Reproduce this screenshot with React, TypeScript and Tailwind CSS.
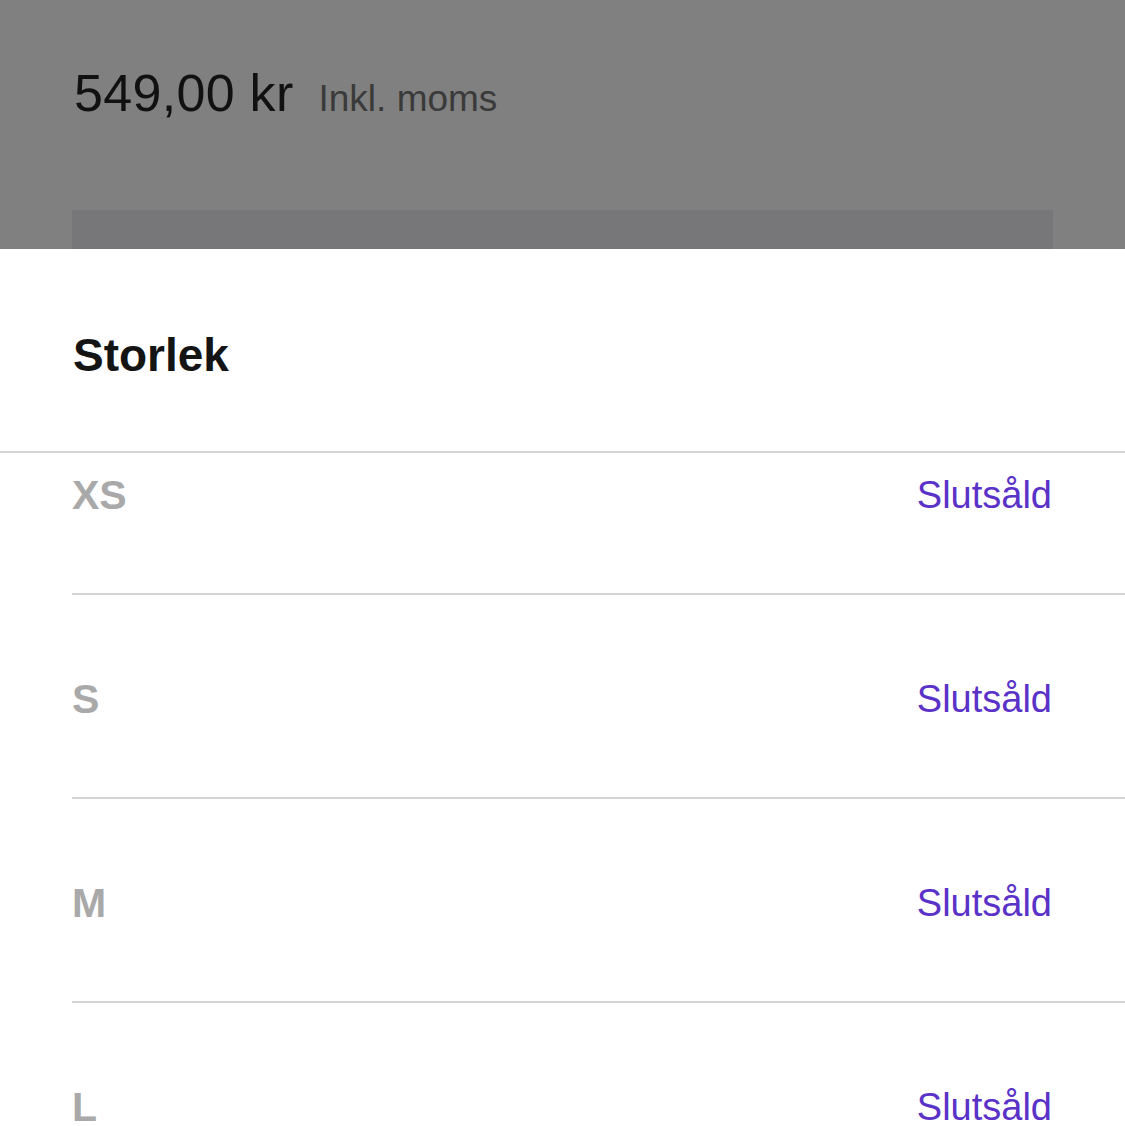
export default function App() {
  const sizes = ["XS", "S", "M", "L"];
  return (
    <div className="w-[1125px] h-[1126px] overflow-hidden bg-white" style={{ fontFamily: '"Liberation Sans", Arial, sans-serif' }}>
      <div className="h-[249px] bg-[#808080] flex flex-col">
        <div className="pt-[67px] pl-[74px] flex items-baseline gap-[25px] h-[210px]">
          <span className="text-[52px] leading-none text-[#111111] tracking-[0.3px]">549,00 kr</span>
          <span className="text-[37px] leading-none text-[#3a3a3a]">Inkl. moms</span>
        </div>
        <div className="ml-[72px] mr-[72px] h-[39px] bg-[#77777a]" />
      </div>
      <div className="h-[204px] pt-[83px] pl-[73px] border-b-2 border-[#d4d4d4]">
        <span className="text-[46px] leading-none font-bold text-[#141414]">Storlek</span>
      </div>
      <div className="overflow-hidden">
        <div className="-mt-[62px]">
          {sizes.map((s) => (
            <div key={s} className="ml-[72px] h-[204px] pt-[6px] border-b-2 border-[#d4d4d4] flex items-center justify-between pr-[73px]">
              <span className="text-[41px] leading-none font-bold text-[#a9a9a9]">{s}</span>
              <span className="text-[38px] leading-none text-[#5b32c8]">Slutsåld</span>
            </div>
          ))}
        </div>
      </div>
    </div>
  );
}
